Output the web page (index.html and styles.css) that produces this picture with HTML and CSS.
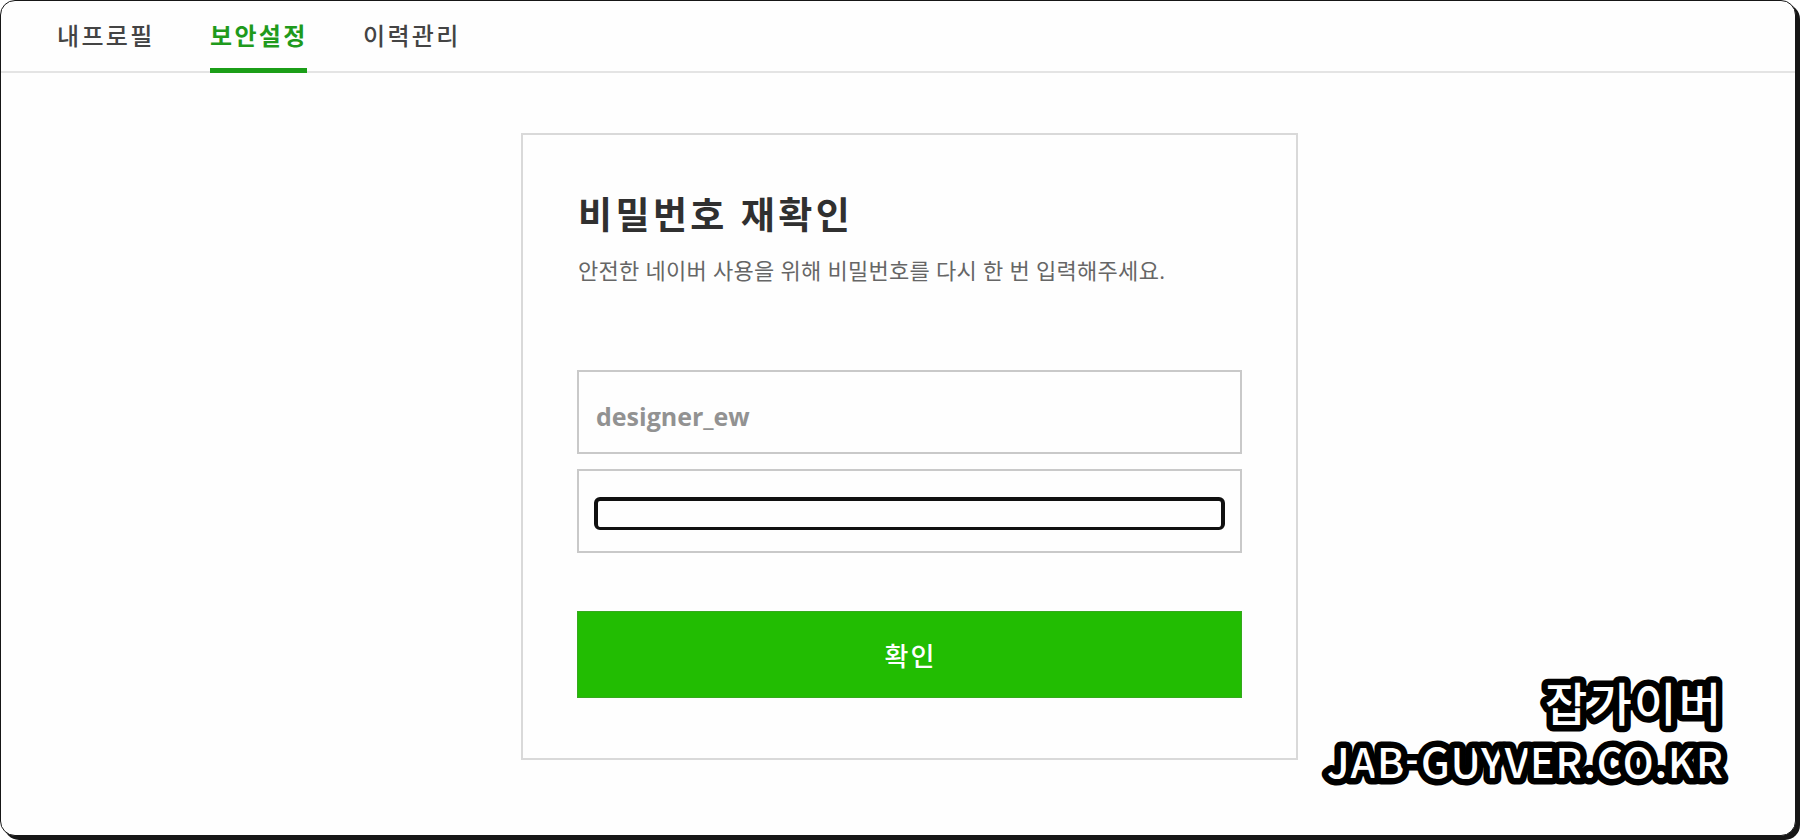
FILE: index.html
```
<!DOCTYPE html>
<html lang="ko">
<head>
  <meta charset="UTF-8">
  <meta name="viewport" content="width=device-width, initial-scale=1.0">
  <title>비밀번호 재확인</title>
  <link rel="stylesheet" href="styles.css">
</head>
<body>
  <div class="page">
    <nav class="tabs">
      <a class="tab">내프로필</a>
      <a class="tab active">보안설정</a>
      <a class="tab">이력관리</a>
    </nav>

    <form class="card">
      <h1 class="title">비밀번호 재확인</h1>
      <p class="desc">안전한 네이버 사용을 위해 비밀번호를 다시 한 번 입력해주세요.</p>
      <div class="field userId">designer_ew</div>
      <div class="field">
        <input class="password" type="password">
      </div>
      <button class="btnConfirm" type="button">확인</button>
    </form>

    <svg class="watermark" width="430" height="130" viewBox="0 0 430 130">
      <text class="markName" x="235" y="61" textLength="176">잡가이버</text>
      <text class="markUrl" x="17" y="118" textLength="396">JAB-GUYVER.CO.KR</text>
    </svg>
  </div>
</body>
</html>
```
FILE: styles.css
```
* {
    box-sizing: border-box;
}
body {
    height: 840px;
    margin: 0;
    background: #fff;
    font-family: "Open Sans", "Noto Sans CJK KR", sans-serif;
}
.page {
    position: relative;
    width: 1796px;
    height: 836px;
    border: 1px solid #161616;
    border-radius: 15px;
    background: #fefefe;
    box-shadow: 4px 4px 0 #161616;
}
.tabs {
    display: flex;
    gap: 56px;
    height: 72px;
    padding-left: 56px;
    border-bottom: 2px solid #e4e4e4;
}
.tab {
    width: 97px;
    height: 72px;
    line-height: 69px;
    color: #444;
    font-size: 24px;
    font-weight: 500;
    letter-spacing: 2.3px;
    white-space: nowrap;
}
.tab.active {
    color: #1f9a1c;
    font-weight: 700;
    border-bottom: 5px solid #1b9e18;
}
.card {
    display: flex;
    flex-direction: column;
    width: 777px;
    height: 627px;
    margin: 60px 0 0 520px;
    padding: 51px 54px 0;
    border: 2px solid #d9d9d9;
}
.title {
    height: 58px;
    margin: 0;
    padding-left: 1px;
    line-height: 58px;
    color: #303030;
    font-size: 37px;
    font-weight: 700;
    letter-spacing: 3.4px;
    white-space: nowrap;
}
.desc {
    height: 40px;
    margin: 7px 0 79px;
    padding-left: 1px;
    line-height: 39px;
    color: #666;
    font-size: 22px;
    letter-spacing: 0.27px;
    white-space: nowrap;
}
.field {
    height: 84px;
    margin-bottom: 15px;
    padding: 26px 15px 0;
    border: 2px solid #c9c9c9;
}
.userId {
    padding-left: 17px;
    line-height: 37px;
    color: #929292;
    font-size: 25px;
    font-weight: 700;
}
.password {
    display: block;
    width: 631px;
    height: 33px;
    padding: 0 4px;
    border: solid #101010;
    border-width: 4px 4px 3px;
    border-radius: 6px;
    outline: none;
    background: #fefefe;
}
.btnConfirm {
    height: 87px;
    margin-top: 43px;
    padding: 0 0 0 2px;
    border: 1px solid #36a81e;
    background: #22bd02;
    color: #fff;
    font-family: inherit;
    font-size: 26px;
    font-weight: 500;
    letter-spacing: 2px;
}
.watermark {
    position: absolute;
    left: 1309px;
    top: 659px;
    font-family: "Noto Sans CJK KR", sans-serif;
    fill: #fff;
    stroke: #000;
    stroke-width: 13px;
    stroke-linejoin: round;
    paint-order: stroke;
}
.markName {
    font-size: 46px;
    font-weight: 500;
}
.markUrl {
    font-size: 41px;
    font-weight: 500;
}
```
